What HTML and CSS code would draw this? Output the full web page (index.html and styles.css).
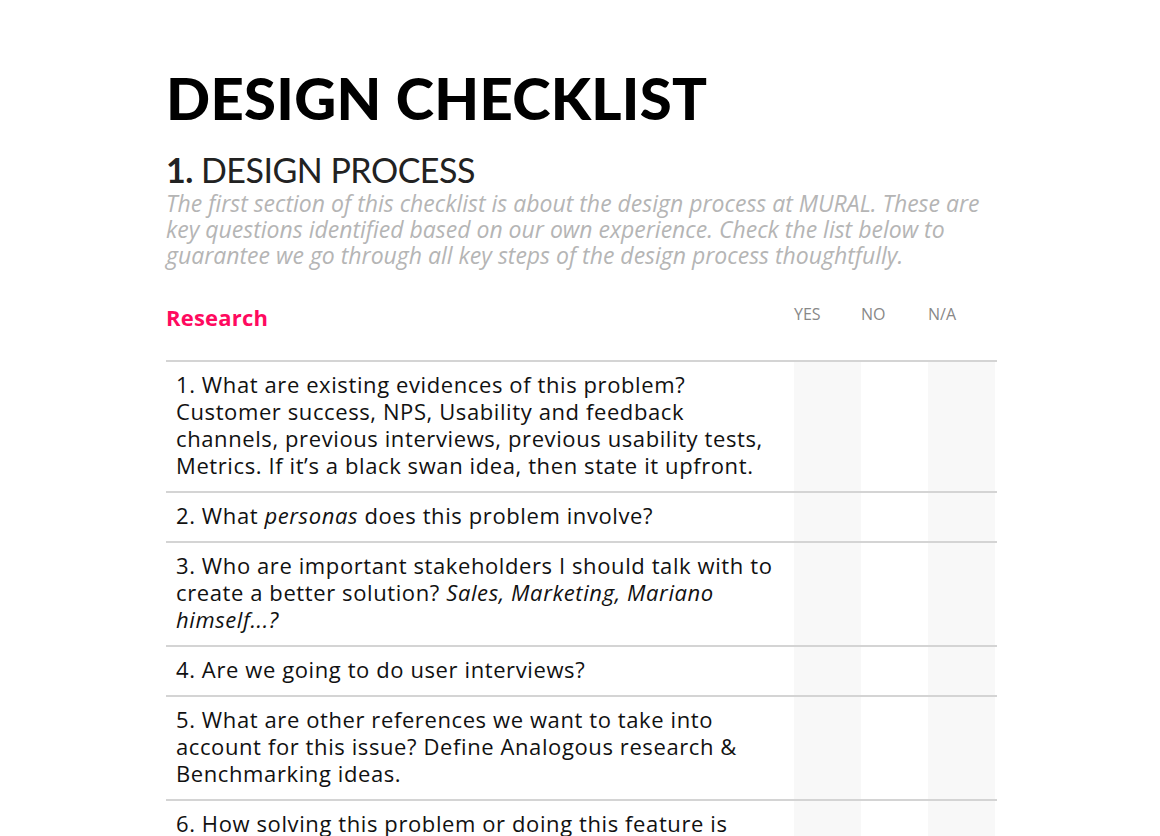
FILE: index.html
```html
<!DOCTYPE html>
<html lang="en">
<head>
<meta charset="utf-8">
<title>Design Checklist</title>
<link rel="stylesheet" href="styles.css">
</head>
<body>
<main class="page">
  <h1 class="title">DESIGN CHECKLIST</h1>
  <h2 class="section"><b>1.</b> DESIGN PROCESS</h2>
  <p class="intro">The first section of this checklist is about the design process at MURAL. These are key questions identified based on our own experience. Check the list below to guarantee we go through all key steps of the design process thoughtfully.</p>

  <div class="checklist">
    <div class="head">
      <div class="group">Research</div>
      <div class="col">YES</div>
      <div class="col">NO</div>
      <div class="col">N/A</div>
    </div>
    <div class="row">
      <div class="q">1. What are existing evidences of this problem? Customer success, NPS, Usability and feedback channels, previous interviews, previous usability tests, Metrics. If it’s a black swan idea, then state it upfront.</div>
      <div class="c shade"></div><div class="c"></div><div class="c shade"></div>
    </div>
    <div class="row">
      <div class="q">2. What <em>personas</em> does this problem involve?</div>
      <div class="c shade"></div><div class="c"></div><div class="c shade"></div>
    </div>
    <div class="row">
      <div class="q">3. Who are important stakeholders I should talk with to create a better solution? <em>Sales, Marketing, Mariano himself...?</em></div>
      <div class="c shade"></div><div class="c"></div><div class="c shade"></div>
    </div>
    <div class="row">
      <div class="q">4. Are we going to do user interviews?</div>
      <div class="c shade"></div><div class="c"></div><div class="c shade"></div>
    </div>
    <div class="row">
      <div class="q">5. What are other references we want to take into account for this issue? Define Analogous research &amp; Benchmarking ideas.</div>
      <div class="c shade"></div><div class="c"></div><div class="c shade"></div>
    </div>
    <div class="row">
      <div class="q">6. How solving this problem or doing this feature is aligned with our product vision and company goals?</div>
      <div class="c shade"></div><div class="c"></div><div class="c shade"></div>
    </div>
  </div>
</main>
</body>
</html>
```

FILE: styles.css
```css
html, body {
  margin: 0;
  padding: 0;
  background: #fff;
}

body {
  font-family: "Open Sans", "Liberation Sans", sans-serif;
  color: #111;
}

.page {
  width: 831px;
  padding: 64px 0 0 166px;
}

.title {
  margin: 0;
  font-family: Lato, "Open Sans", sans-serif;
  font-size: 58px;
  line-height: 68px;
  font-weight: 900;
  letter-spacing: 0.3px;
  color: #000;
}

.section {
  margin: 18px 0 0;
  font-family: Lato, "Open Sans", sans-serif;
  font-size: 34px;
  line-height: 40px;
  font-weight: 400;
  letter-spacing: -0.5px;
  color: #222;
}

.section b {
  font-weight: 700;
}

.intro {
  margin: 0;
  font-size: 23px;
  line-height: 26px;
  font-style: italic;
  color: #b5b5b5;
}

.checklist {
  margin-top: 28px;
}

.head {
  display: flex;
  height: 64px;
}

.group {
  width: 628px;
  font-size: 22px;
  line-height: 26px;
  font-weight: 700;
  letter-spacing: 0.2px;
  color: #ff0a5f;
  padding-top: 8px;
}

.col {
  width: 67px;
  font-size: 16px;
  line-height: 20px;
  color: #888;
  padding-top: 8px;
}

.row {
  display: flex;
  border-top: 2px solid #d4d4d4;
}

.q {
  width: 604px;
  padding: 9px 14px 12px 10px;
  font-size: 22px;
  line-height: 27px;
  letter-spacing: 0.6px;
}

.c {
  width: 67px;
}

.c.shade {
  background: #f8f8f8;
}
```
